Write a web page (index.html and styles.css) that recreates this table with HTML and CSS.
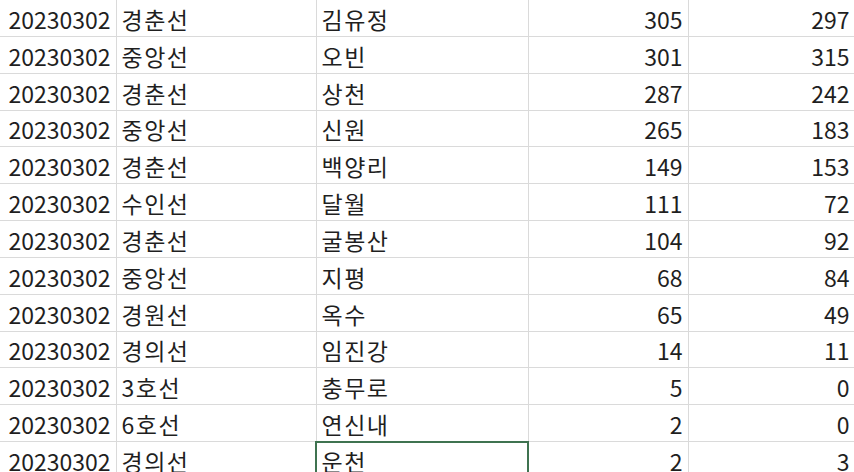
FILE: index.html
```html
<!DOCTYPE html>
<html lang="ko">
<head>
<meta charset="utf-8">
<link rel="stylesheet" href="styles.css">
</head>
<body>
<div class="sheet">
<table class="grid">
<colgroup><col class="c-a"><col class="c-b"><col class="c-c"><col class="c-d"><col class="c-e"></colgroup>
<tbody>
<tr><td class="num">20230302</td><td class="txt">경춘선</td><td class="txt">김유정</td><td class="num">305</td><td class="num">297</td></tr>
<tr><td class="num">20230302</td><td class="txt">중앙선</td><td class="txt">오빈</td><td class="num">301</td><td class="num">315</td></tr>
<tr><td class="num">20230302</td><td class="txt">경춘선</td><td class="txt">상천</td><td class="num">287</td><td class="num">242</td></tr>
<tr><td class="num">20230302</td><td class="txt">중앙선</td><td class="txt">신원</td><td class="num">265</td><td class="num">183</td></tr>
<tr><td class="num">20230302</td><td class="txt">경춘선</td><td class="txt">백양리</td><td class="num">149</td><td class="num">153</td></tr>
<tr><td class="num">20230302</td><td class="txt">수인선</td><td class="txt">달월</td><td class="num">111</td><td class="num">72</td></tr>
<tr><td class="num">20230302</td><td class="txt">경춘선</td><td class="txt">굴봉산</td><td class="num">104</td><td class="num">92</td></tr>
<tr><td class="num">20230302</td><td class="txt">중앙선</td><td class="txt">지평</td><td class="num">68</td><td class="num">84</td></tr>
<tr><td class="num">20230302</td><td class="txt">경원선</td><td class="txt">옥수</td><td class="num">65</td><td class="num">49</td></tr>
<tr><td class="num">20230302</td><td class="txt">경의선</td><td class="txt">임진강</td><td class="num">14</td><td class="num">11</td></tr>
<tr><td class="num">20230302</td><td class="txt">3호선</td><td class="txt">충무로</td><td class="num">5</td><td class="num">0</td></tr>
<tr><td class="num">20230302</td><td class="txt">6호선</td><td class="txt">연신내</td><td class="num">2</td><td class="num">0</td></tr>
<tr><td class="num">20230302</td><td class="txt">경의선</td><td class="txt selected">운천</td><td class="num">2</td><td class="num">3</td></tr>
</tbody>
</table>
</div>
</body>
</html>
```
FILE: styles.css
```css
html, body {
  margin: 0;
  padding: 0;
  background: #ffffff;
}
.sheet {
  width: 854px;
  height: 472px;
  overflow: hidden;
}
.grid {
  border-collapse: collapse;
  table-layout: fixed;
  width: 855px;
  margin-top: -1px;
  font-family: "Noto Sans CJK KR", "Noto Sans", sans-serif;
  font-size: 23px;
  color: #1f1f1f;
}
.c-a { width: 116px; }
.c-b { width: 200px; }
.c-c { width: 212px; }
.c-d { width: 160px; }
.c-e { width: 167px; }
.grid td {
  height: 34.85px;
  padding: 0 5px 1px 5px;
  border: 1px solid #dadada;
  vertical-align: bottom;
  line-height: 32px;
  white-space: nowrap;
  overflow: hidden;
}
.grid tr td:first-child {
  border-left: none;
  padding-left: 0;
}
.grid td.num {
  text-align: right;
  padding-right: 5px;
}
.grid td.txt {
  letter-spacing: 1.5px;
}
.grid td.selected {
  outline: 2px solid #3f7350;
  outline-offset: -1px;
}
```
